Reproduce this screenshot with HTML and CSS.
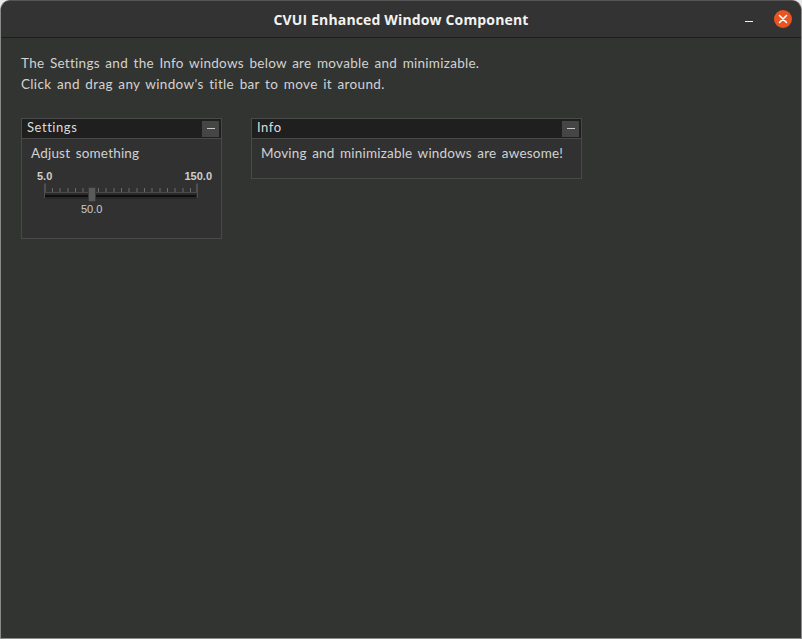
FILE: index.html
```html
<!DOCTYPE html>
<html lang="en">
<head>
<meta charset="utf-8">
<title>CVUI Enhanced Window Component</title>
<link rel="stylesheet" href="styles.css">
</head>
<body>
<div class="app">
  <header class="titlebar">
    <h1 class="app-title">CVUI Enhanced Window Component</h1>
    <div class="win-controls">
      <span class="win-min"></span>
      <span class="win-close">
        <svg width="18" height="18" viewBox="0 0 18 18"><path d="M5.500 5.500l7 7M12.500 5.500l-7 7" stroke="#fff" stroke-width="1.600" stroke-linecap="round"/></svg>
      </span>
    </div>
  </header>
  <main class="canvas">
    <div class="intro">
      <p>The Settings and the Info windows below are movable and minimizable.</p>
      <p class="intro-second">Click and drag any window's title bar to move it around.</p>
    </div>
    <div class="desktop">
      <section class="panel panel-settings">
        <div class="panel-head"><span class="panel-title">Settings</span><span class="panel-btn"><i></i></span></div>
        <div class="panel-body">
          <p class="body-text">Adjust something</p>
          <div class="slider">
            <div class="slider-ends"><span>5.0</span><span>150.0</span></div>
            <svg class="slider-track" width="154" height="21" viewBox="0 0 154 21">
              <path d="M1 .5V15M153 .5V15" stroke="#6e6e6e" fill="none"/>
              <path d="M8.500 5v4M16 5v4M24 5v4M31.500 5v4M39 5v4M47 5v4M54.500 5v4M62 5v4M70 5v4M77.500 5v4M85 5v4M93 5v4M100.500 5v4M108 5v4M116 5v4M123.500 5v4M131 5v4M139 5v4M146.500 5v4" stroke="#6a6a6a" fill="none"/>
              <rect x="1" y="9" width="152" height="1" fill="#4a4a4a"/>
              <rect x="1" y="10" width="152" height="6" fill="#292929"/>
              <rect x="1" y="12" width="151" height="2" fill="#0e0e0e"/>
              <rect x="44.500" y="4.500" width="7" height="14" rx="1" fill="#5a5a5a" stroke="#3a3a3a"/>
            </svg>
            <div class="slider-value">50.0</div>
          </div>
        </div>
      </section>
      <section class="panel panel-info">
        <div class="panel-head"><span class="panel-title">Info</span><span class="panel-btn"><i></i></span></div>
        <div class="panel-body">
          <p class="body-text">Moving and minimizable windows are awesome!</p>
        </div>
      </section>
    </div>
  </main>
</div>
</body>
</html>
```

FILE: styles.css
```css
* { box-sizing: border-box; margin: 0; padding: 0; }
html, body { width: 802px; height: 639px; overflow: hidden; background: #e9e9e9; }
body { font-family: "Lato", "Open Sans", sans-serif; }
.app {
  width: 802px; height: 639px; display: flex; flex-direction: column;
  border-radius: 10px 10px 0 0; overflow: hidden;
  border: 1px solid #8a8a8a; border-top-color: #555;
  background: #323431;
}
.titlebar {
  height: 37px; flex: none; background: #333333; border-bottom: 1px solid #1d1d1d;
  display: flex; align-items: center; justify-content: center; position: relative;
}
.app-title { font: 700 14px "Open Sans", sans-serif; color: #f2f2f2; letter-spacing: .15px; }
.win-controls { position: absolute; right: 9px; top: 9px; display: flex; align-items: center; gap: 21px; }
.win-min { width: 8px; height: 1px; background: #f0f0f0; margin-top: 4px; }
.win-close { width: 18px; height: 18px; border-radius: 50%; background: #e95420; display: block; }
.win-close svg { display: block; }
.canvas { flex: 1; padding: 15px 0 0 20px; color: #d2d2d2; }
.intro { font-size: 13.500px; line-height: 21px; letter-spacing: .28px; word-spacing: 1.800px; font-weight: 400; }
.intro-second { letter-spacing: .33px; }
.desktop { display: flex; align-items: flex-start; gap: 29px; margin-top: 23px; }
.panel { border: 1px solid #494949; background: #313131; }
.panel-settings { width: 201px; height: 121px; }
.panel-info { width: 331px; height: 61px; }
.panel-head {
  height: 20px; background: #1f1f1f; border-bottom: 1px solid #494949;
  display: flex; align-items: center; justify-content: space-between; padding: 0 2px 0 5px;
}
.panel-title { font-size: 13px; font-weight: 400; letter-spacing: .55px; color: #dcdcdc; margin-top: -3px; }
.panel-btn { width: 17px; height: 16px; background: #454545; display: flex; align-items: center; justify-content: center; }
.panel-btn i { width: 8px; height: 1.500px; background: #c8c8c8; display: block; }
.panel-body { padding: 4px 0 0 9px; }
.body-text { font-size: 13.500px; line-height: 20px; font-weight: 400; letter-spacing: .2px; word-spacing: 1.800px; color: #d2d2d2; white-space: nowrap; }
.slider { width: 175px; margin: 7px 0 0 6px; }
.slider-ends { display: flex; justify-content: space-between; font: 700 11px "Liberation Sans", sans-serif; color: #cfcfcf; line-height: 12px; margin-top: 5px; }
.slider-track { display: block; margin: 1px 0 0 7px; }
.slider-value { font: 400 11px "Liberation Sans", sans-serif; color: #cccccc; line-height: 12px; margin: -1px 0 0 44px; }
```
